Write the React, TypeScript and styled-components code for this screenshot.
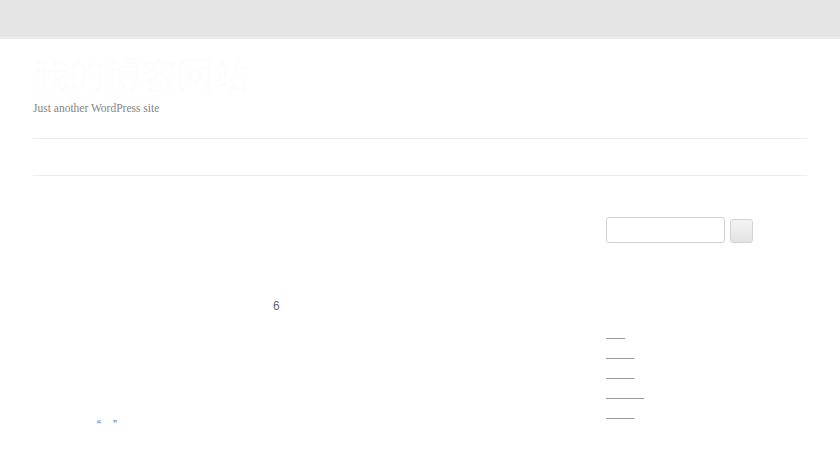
import styled, { createGlobalStyle } from "styled-components"

const GlobalStyle = createGlobalStyle`
  html, body {
    margin: 0;
    padding: 0;
    background: #fff;
  }
  body {
    font-family: "Liberation Serif", "Noto Sans CJK SC", serif;
    color: #555;
  }
`

const links = ["首页", "新闻稿", "产品页", "联系方式", "留言板"]

const App = () => {
  return (
    <>
      <GlobalStyle />
      <TopBar />
      <Page>
        <Masthead>
          <SiteTitle>我的博客网站</SiteTitle>
          <Tagline>Just another WordPress site</Tagline>
        </Masthead>
        <Nav>
          <NavItem>首页</NavItem>
          <NavItem>示例页面</NavItem>
        </Nav>
        <Columns>
          <Main>
            <PostTitle>世界，您好！</PostTitle>
            <Meta>
              <Ghost>发布于二零二四年四月十二日作者管理员分类</Ghost>6
            </Meta>
            <Paragraph>
              <Ghost>欢迎使用</Ghost>
            </Paragraph>
            <Paragraph>
              <Ghost>这是您的第一篇文章</Ghost>
            </Paragraph>
            <Paragraph>
              <Ghost>编辑或删除它</Ghost>
            </Paragraph>
            <Quote>
              <Ghost>评论的作者</Ghost>“<Ghost>人</Ghost>”
            </Quote>
          </Main>
          <Sidebar>
            <SearchForm>
              <SearchInput type="text" />
              <SearchButton type="button" />
            </SearchForm>
            <WidgetTitle>近期文章</WidgetTitle>
            <LinkList>
              {links.map((l) => (
                <li key={l}>
                  <SideLink href="#">{l}</SideLink>
                </li>
              ))}
            </LinkList>
          </Sidebar>
        </Columns>
      </Page>
    </>
  )
}

export default App

const TopBar = styled.div`
  height: 36px;
  background: #e5e5e5;
  border-bottom: 3px solid #ebebeb;
`

const Page = styled.div`
  padding: 0 33px;
`

const Masthead = styled.header`
  padding-top: 8px;
  height: 100px;
  border-bottom: 1px solid #ececec;
  box-sizing: border-box;
`

const SiteTitle = styled.h1`
  margin: 0;
  height: 52px;
  font-size: 36px;
  font-weight: normal;
  line-height: 52px;
  color: #fdfdfd;
  font-family: "Noto Sans CJK SC", sans-serif;
`

const Tagline = styled.p`
  margin: 2px 0 0;
  font-size: 11.5px;
  line-height: 14px;
  color: #858585;
`

const Nav = styled.nav`
  display: flex;
  gap: 24px;
  height: 36px;
  border-bottom: 1px solid #ececec;
  align-items: center;
  font-family: "Noto Sans CJK SC", sans-serif;
`

const NavItem = styled.span`
  font-size: 12px;
  color: transparent;
`

const Columns = styled.div`
  display: flex;
  gap: 31px;
  padding-top: 41px;
`

const Main = styled.main`
  flex: 1;
  font-family: "Liberation Sans", "Noto Sans CJK SC", sans-serif;
`

const Ghost = styled.span`
  color: transparent;
  font-family: "Noto Sans CJK SC", sans-serif;
`

const PostTitle = styled.h2`
  margin: 0;
  height: 80px;
  font-size: 22px;
  font-weight: normal;
  line-height: 30px;
  color: transparent;
  font-family: "Noto Sans CJK SC", sans-serif;
`

const Meta = styled.div`
  font-size: 12px;
  line-height: 16px;
  color: #666;
`

const Paragraph = styled.p`
  margin: 8px 0 0;
  height: 22px;
  font-size: 12px;
  line-height: 18px;
`

const Quote = styled.p`
  margin: 11px 0 0;
  padding-left: 4px;
  font-size: 12px;
  line-height: 18px;
  color: #777;
`

const Sidebar = styled.aside`
  width: 201px;
  flex-shrink: 0;
`

const SearchForm = styled.form`
  display: flex;
  align-items: center;
  gap: 5px;
`

const SearchInput = styled.input`
  width: 119px;
  height: 26px;
  box-sizing: border-box;
  border: 1px solid #cfcfcf;
  border-radius: 3px;
  background: #fff;
  margin: 0;
  padding: 0 4px;
`

const SearchButton = styled.button`
  width: 23px;
  height: 24px;
  box-sizing: border-box;
  border: 1px solid #d3d3d3;
  border-radius: 3px;
  background: linear-gradient(#f3f3f3, #e3e3e3);
  margin: 2px 0 0;
  padding: 0;
`

const WidgetTitle = styled.h3`
  margin: 51px 0 0;
  height: 28px;
  font-size: 14px;
  font-weight: normal;
  color: transparent;
  font-family: "Noto Sans CJK SC", sans-serif;
`

const LinkList = styled.ul`
  list-style: none;
  margin: 0;
  padding: 0;

  li {
    height: 20px;
    line-height: 20px;
  }
`

const SideLink = styled.a`
  font-family: "Noto Sans CJK SC", sans-serif;
  font-size: 9.5px;
  color: transparent;
  text-decoration: underline;
  text-decoration-color: #999;
  text-decoration-thickness: 1px;
`
